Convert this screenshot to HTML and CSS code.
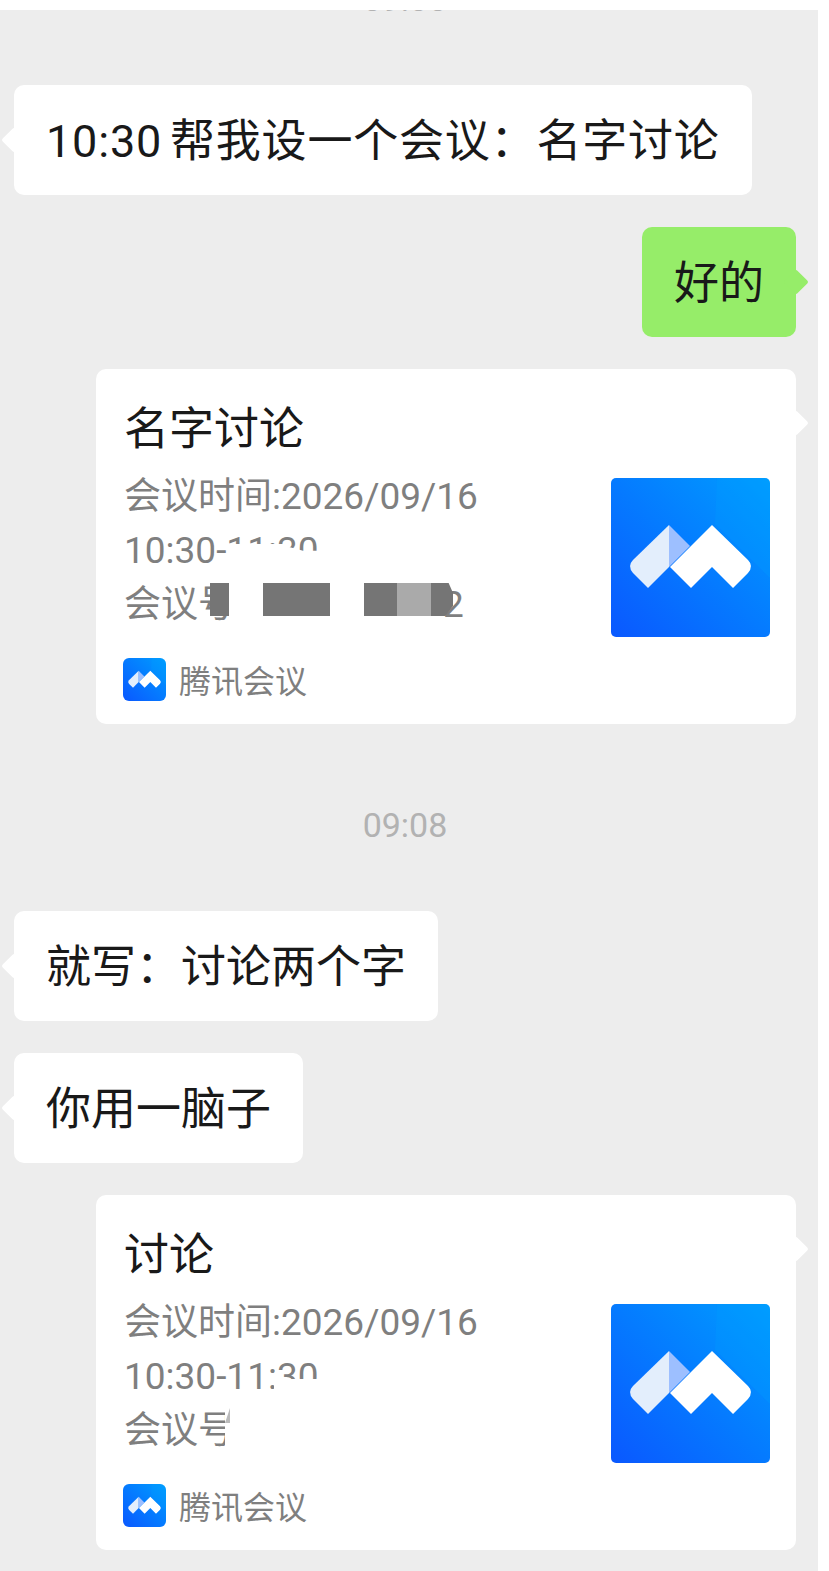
FILE: index.html
```html
<!DOCTYPE html>
<html lang="zh-CN">
<head>
    <meta charset="UTF-8" />
    <meta name="viewport" content="width=device-width, initial-scale=1.0" />
    <title>会议</title>
    <link rel="stylesheet" href="styles.css">
</head>
<body>
    <svg class="defs" width="0" height="0" aria-hidden="true">
        <defs>
            <linearGradient id="meetBg" x1="0" y1="1" x2="1" y2="0">
                <stop offset="0" stop-color="#0a58ff" />
                <stop offset="1" stop-color="#009dff" />
            </linearGradient>
            <symbol id="meetLogo" viewBox="0 0 159 159">
                <rect width="159" height="159" fill="url(#meetBg)" />
                <path d="M159 0 L106 0 L104 46 L159 100 Z" fill="#00a0ff" opacity="0.25" />
                <path d="M58 47 V89 L37 110 L22 95 Q16 88 22 82 Z" fill="#e3eefc" />
                <path d="M58 47 L79 68 L58 89 Z" fill="#9dbfff" />
                <path d="M101 47 L137 82 Q143 88 137 95 L122 110 L101 89 L80 110 L59 89 Z" fill="#fff" />
            </symbol>
        </defs>
    </svg>

    <div class="chat">
        <div class="time-cut"><span>09:00</span></div>

        <div class="bubble bubble-left first">10:30 帮我设一个会议：名字讨论</div>
        <div class="bubble bubble-right">好的</div>

        <div class="card">
            <div class="card-title">名字讨论</div>
            <div class="card-main">
                <div class="meta">
                    <div class="meta-line">会议时间:2026/09/16</div>
                    <div class="meta-line">10:30-11:30<i class="cover cover-a"></i></div>
                    <div class="meta-line">会议号<span class="tail">2</span>
                        <div class="mosaic">
                            <i class="tile dark w19"></i>
                            <i class="tile w34"></i>
                            <i class="tile dark w67"></i>
                            <i class="tile w34"></i>
                            <i class="tile dark w33"></i>
                            <i class="tile grey w34"></i>
                            <i class="tile dark w22 cut"></i>
                        </div>
                    </div>
                </div>
                <svg class="thumb"><use href="#meetLogo" /></svg>
            </div>
            <div class="card-foot">
                <svg class="foot-icon"><use href="#meetLogo" /></svg>
                <span>腾讯会议</span>
            </div>
        </div>

        <div class="time">09:08</div>

        <div class="bubble bubble-left">就写：讨论两个字</div>
        <div class="bubble bubble-left">你用一脑子</div>

        <div class="card">
            <div class="card-title">讨论</div>
            <div class="card-main">
                <div class="meta">
                    <div class="meta-line">会议时间:2026/09/16</div>
                    <div class="meta-line">10:30-11:30<i class="cover cover-b"></i></div>
                    <div class="meta-line">会议号<i class="cover cover-c"></i><i class="sliver"></i></div>
                </div>
                <svg class="thumb"><use href="#meetLogo" /></svg>
            </div>
            <div class="card-foot">
                <svg class="foot-icon"><use href="#meetLogo" /></svg>
                <span>腾讯会议</span>
            </div>
        </div>
    </div>
</body>
</html>
```

FILE: styles.css
```css
* {
    box-sizing: border-box;
}

html, body {
    margin: 0;
    padding: 0;
    background: white;
}

body {
    font-family: Roboto, 'Noto Sans CJK SC', sans-serif;
    color: #191919;
}

.defs {
    position: absolute;
}

.chat {
    width: 818px;
    height: 1561px;
    margin-top: 10px;
    padding: 0 22px 0 14px;
    background: #ededed;
    overflow: hidden;
}

/* time stamp scrolled off under the top edge */
.time-cut {
    height: 3px;
    overflow: hidden;
    text-align: center;
    font-size: 34px;
    line-height: 40px;
    color: #b2b2b2;
}

    .time-cut span {
        display: block;
        margin-top: -31px;
    }

.bubble {
    position: relative;
    width: fit-content;
    height: 110px;
    margin-top: 32px;
    padding: 0 32px;
    border-radius: 10px;
    background: white;
    font-size: 45px;
    line-height: 113px;
    white-space: nowrap;
}

    .bubble::before {
        content: "";
        position: absolute;
        top: 46px;
        width: 18px;
        height: 18px;
        background: inherit;
        transform: rotate(45deg);
        border-radius: 2px;
    }

.first {
    margin-top: 72px;
    letter-spacing: 0.8px;
    word-spacing: -4px;
}

.bubble-left::before {
    left: -9px;
}

.bubble-right {
    margin-left: auto;
    background: #96ed69;
}

    .bubble-right::before {
        right: -9px;
    }

.card {
    position: relative;
    height: 355px;
    margin: 32px 0 0 82px;
    padding: 30px 26px 0 28px;
    border-radius: 10px;
    background: white;
}

    .card::after {
        content: "";
        position: absolute;
        top: 45px;
        right: -9px;
        width: 18px;
        height: 18px;
        background: white;
        transform: rotate(45deg);
        border-radius: 2px;
    }

.card-title {
    height: 60px;
    margin-bottom: 11px;
    font-size: 45px;
    line-height: 62px;
}

.card-main {
    display: flex;
    justify-content: space-between;
    height: 167px;
}

.meta {
    color: #7f7f7f;
    font-size: 37px;
}

.meta-line {
    position: relative;
    height: 54px;
    line-height: 54px;
    white-space: nowrap;
}

.thumb {
    width: 159px;
    height: 159px;
    margin-top: 8px;
    border-radius: 5px;
}

.card-foot {
    display: flex;
    align-items: center;
    gap: 13px;
    margin: 19px 0 0 -1px;
    color: #7f7f7f;
    font-size: 32px;
}

.foot-icon {
    width: 43px;
    height: 43px;
    border-radius: 6px;
}

/* redaction painted over the meeting details */
.cover {
    position: absolute;
    background: white;
}

.cover-a {
    left: 109px;
    top: 20px;
    width: 100px;
    height: 34px;
    clip-path: polygon(0 0, 45% 0, 70% 20%, 100% 20%, 100% 100%, 0 100%);
}

.cover-b {
    left: 150px;
    top: 29px;
    width: 60px;
    height: 25px;
}

.cover-c {
    left: 101px;
    top: 0;
    width: 50px;
    height: 54px;
}

.sliver {
    position: absolute;
    left: 101px;
    top: 4px;
    width: 5px;
    height: 15px;
    background: #bbb;
    clip-path: polygon(100% 0, 100% 100%, 0 100%);
}

.tail {
    position: absolute;
    left: 319px;
    top: 0;
}

.mosaic {
    position: absolute;
    left: 86px;
    top: 5px;
    display: flex;
    height: 33px;
}

.tile {
    display: block;
    background: white;
}

.dark {
    background: #757575;
}

.grey {
    background: #aaa;
}

.cut {
    clip-path: polygon(0 0, 80% 0, 100% 30%, 100% 70%, 65% 100%, 0 100%);
}

.w19 { width: 19px; }
.w22 { width: 22px; }
.w33 { width: 33px; }
.w34 { width: 34px; }
.w67 { width: 67px; }

.time {
    height: 40px;
    margin-top: 81px;
    margin-bottom: 66px;
    text-align: center;
    color: #b2b2b2;
    font-size: 34px;
    line-height: 40px;
}
```
